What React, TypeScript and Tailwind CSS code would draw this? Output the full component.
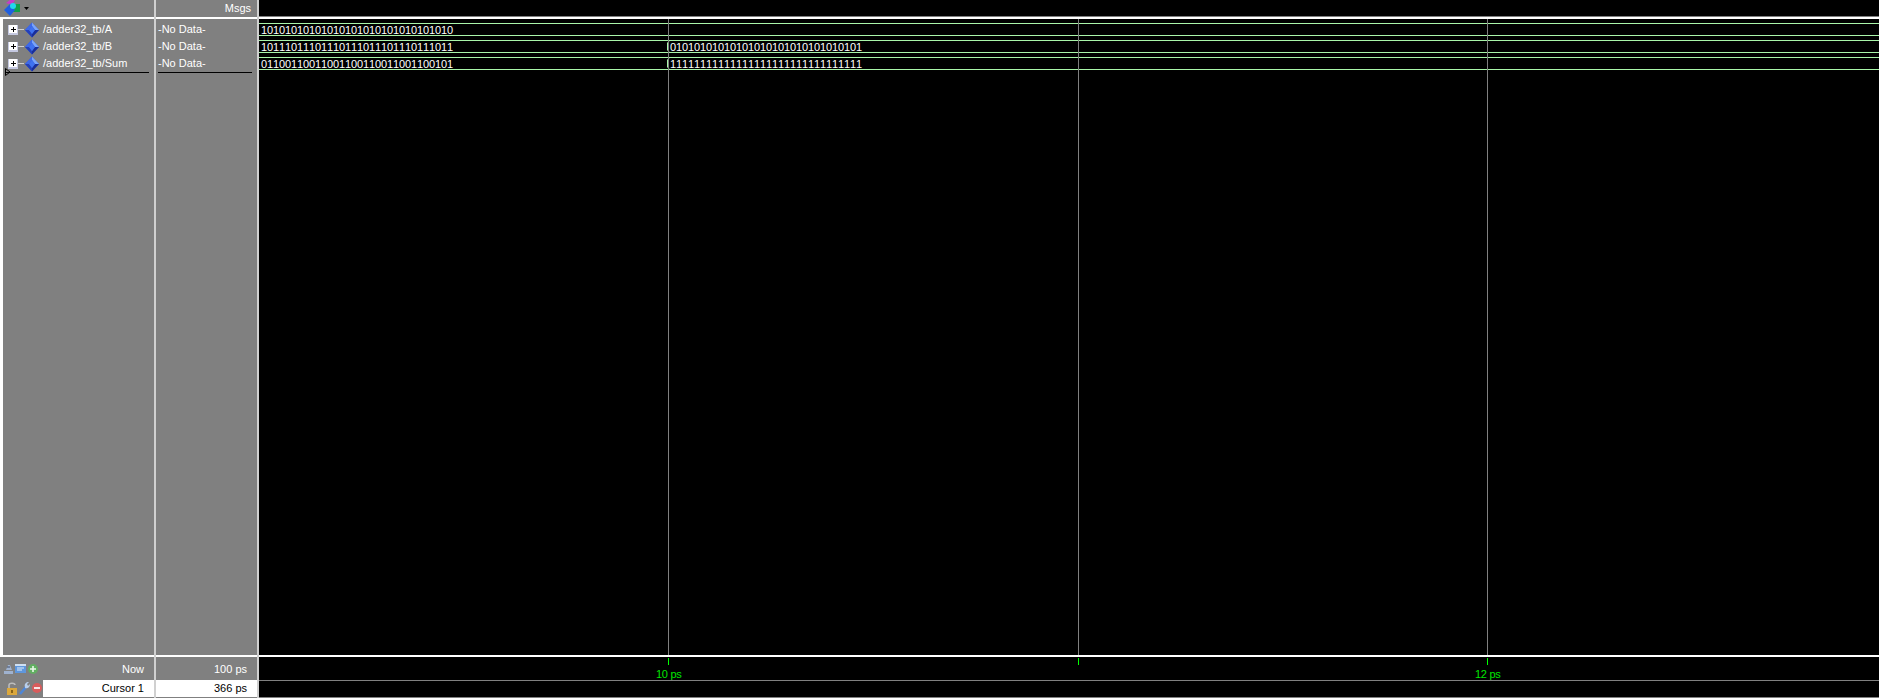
const font = { fontFamily: '"Liberation Sans", Arial, sans-serif' };

function Diamond() {
  return (
    <svg width="16" height="16" viewBox="0 0 16 16" className="shrink-0">
      <polygon points="8,0.5 15,8 8,15.5 1,8" fill="#2f55d8" />
      <polygon points="8,0.5 15,8 11,8 8,4" fill="#7aa4f8" />
      <polygon points="8,0.5 1,8 5,8 8,4" fill="#3f6ae8" />
      <polygon points="1,8 8,15.5 8,12 5,8" fill="#2440b8" />
      <polygon points="15,8 8,15.5 8,12 11,8" fill="#1a2e98" />
      <polygon points="5,8 8,4 11,8 8,12" fill="#3f72f0" />
    </svg>
  );
}

function Plus() {
  return (
    <svg width="16" height="12" viewBox="0 0 16 12" className="shrink-0">
      <line x1="10" y1="5.5" x2="16" y2="5.5" stroke="#d0d0d0" />
      <rect x="0" y="1" width="10" height="10" fill="#c4c8e0" />
      <rect x="1" y="1" width="8" height="8" fill="#ffffff" />
      <path d="M3 5.5H8M5.5 3V8" stroke="#000" strokeWidth="1" fill="none" />
    </svg>
  );
}

function SignalRow({ name }: { name: string }) {
  return (
    <div className="flex h-[17px] items-center pl-[5px]">
      <Plus />
      <Diamond />
      <span className="ml-[3px] text-[11px] leading-none text-white">{name}</span>
    </div>
  );
}

function Digits({ text, className }: { text: string; className: string }) {
  return (
    <span className={`absolute top-0 text-[11px] leading-[13px] tracking-[-0.12px] text-white [font-kerning:none] ${className}`}>
      {text}
    </span>
  );
}

function Bus({ first, second }: { first: string; second?: string }) {
  return (
    <div className="relative mb-[4px] box-content h-[11px] border-y border-[#a9f5a9]">
      <Digits text={first} className="left-[2px]" />
      {second && (
        <>
          <svg width="4" height="13" viewBox="0 0 4 13" className="absolute left-[408px] top-[-1px]">
            <path d="M2.5 0.5L0.5 3V10L2.5 12.5" stroke="#a9f5a9" fill="none" />
          </svg>
          <Digits text={second} className="left-[411px]" />
        </>
      )}
    </div>
  );
}

function TopIcon() {
  return (
    <svg width="30" height="16" viewBox="0 0 30 16" className="shrink-0">
      <polygon points="6,3 10,0 15,0 12,5" fill="#c83cc8" />
      <rect x="13" y="4" width="7" height="8" fill="#12a048" />
      <polygon points="10,4 15,10 10,16 4,10" fill="#1f5fe0" />
      <circle cx="13" cy="6" r="3" fill="#22d8ec" />
      <polygon points="24,7 29,7 26.5,10" fill="#000" />
    </svg>
  );
}

function NowIcons() {
  return (
    <svg width="36" height="12" viewBox="0 0 36 12" className="shrink-0">
      <path d="M0 8H9V11H0ZM2 7L4 2H6L8 7Z" fill="#9fb2cf" />
      <path d="M3 4H6" stroke="#44506a" />
      <rect x="11" y="1" width="11" height="9" fill="#5f97dc" />
      <rect x="11" y="1" width="11" height="2" fill="#cfe0f2" />
      <path d="M13 5H20M13 7H18" stroke="#e4eef9" />
      <circle cx="29" cy="6" r="5" fill="#62ae62" />
      <path d="M26 6H32M29 3V9" stroke="#eaf8ea" strokeWidth="1.6" />
    </svg>
  );
}

function CursorIcons() {
  return (
    <svg width="36" height="14" viewBox="0 0 36 14" className="shrink-0">
      <rect x="0" y="6" width="10" height="7" fill="#dca83c" />
      <rect x="4" y="8" width="2" height="3" fill="#8a6418" />
      <path d="M2 6V3C2 0.5 8 0.5 8 3" stroke="#bdbdbd" strokeWidth="1.5" fill="none" />
      <path d="M13 12L19 5" stroke="#4e86d6" strokeWidth="2.6" />
      <path d="M18 5C17 2 19 0 22 0L20 2L21 4L23 2C23 5 21 7 18 6Z" fill="#b8cfec" />
      <circle cx="30" cy="6" r="5" fill="#d85c5c" />
      <path d="M27 6H33" stroke="#f8e4e4" strokeWidth="2" />
    </svg>
  );
}

function Sash() {
  return <div className="w-[2px] shrink-0 bg-[#d0d0d0]" />;
}

export default function App() {
  const a = "10101010101010101010101010101010";
  const b = "10111011101110111011101110111011";
  const s = "01100110011001100110011001100101";
  const b2 = "01010101010101010101010101010101";
  const s2 = "11111111111111111111111111111111";
  return (
    <div className="flex h-[698px] w-[1879px] flex-col overflow-hidden bg-black" style={font}>
      {/* main */}
      <div className="flex h-[655px]">
        {/* name pane */}
        <div className="flex w-[154px] flex-col bg-[#808080]">
          <div className="flex h-[17px] items-start">
            <TopIcon />
          </div>
          <div className="relative flex-1 border-l-[3px] border-t-2 border-white pt-[2px] pr-px">
            <SignalRow name="/adder32_tb/A" />
            <SignalRow name="/adder32_tb/B" />
            <SignalRow name="/adder32_tb/Sum" />
            <div className="absolute left-[2px] right-[5px] top-[53px] h-px bg-black" />
            <svg width="6" height="8" viewBox="0 0 6 8" className="absolute left-[2px] top-[49px]">
              <path d="M0.5 0.5L5 4L0.5 7.5Z" fill="none" stroke="#000" />
            </svg>
          </div>
        </div>
        <Sash />
        {/* value pane */}
        <div className="flex w-[101px] flex-col bg-[#808080]">
          <div className="flex h-[17px] items-center justify-end pr-[6px] text-[11px] text-white">Msgs</div>
          <div className="h-[2px] bg-white" />
          <div className="relative flex-1 pl-[2px] pt-[2px]">
            <div className="flex h-[17px] items-center text-[11px] leading-none text-white">-No Data-</div>
            <div className="flex h-[17px] items-center text-[11px] leading-none text-white">-No Data-</div>
            <div className="flex h-[17px] items-center text-[11px] leading-none text-white">-No Data-</div>
            <div className="absolute left-[2px] right-[5px] top-[53px] h-px bg-black" />
          </div>
        </div>
        <Sash />
        {/* wave pane */}
        <div className="relative flex-1 bg-black">
          <div className="h-[16px]" />
          <div className="h-px bg-[#808080]" />
          <div className="h-[2px] bg-white" />
          <div className="pt-[4px]">
            <Bus first={a} />
            <Bus first={b} second={b2} />
            <Bus first={s} second={s2} />
          </div>
          <div className="absolute bottom-0 left-[409px] top-[19px] w-px bg-[#808080]" />
          <div className="absolute bottom-0 left-[819px] top-[19px] w-px bg-[#808080]" />
          <div className="absolute bottom-0 left-[1228px] top-[19px] w-px bg-[#808080]" />
        </div>
      </div>
      {/* bottom */}
      <div className="flex flex-1 flex-col">
        <div className="flex h-[2px]">
          <div className="w-[154px] bg-white" />
          <Sash />
          <div className="w-[101px] bg-white" />
          <Sash />
          <div className="flex-1 bg-white" />
        </div>
        <div className="flex flex-1">
          <div className="flex w-[154px] flex-col bg-[#808080]">
            <div className="flex h-[23px] items-center justify-between pl-[4px] pr-[10px] pt-px text-[11px] text-white">
              <NowIcons />
              <span>Now</span>
            </div>
            <div className="flex h-[17px] items-center">
              <div className="flex w-[43px] items-center pl-[7px]">
                <CursorIcons />
              </div>
              <div className="flex h-[17px] flex-1 items-center justify-end bg-white pr-[10px] text-[11px] text-black">Cursor 1</div>
            </div>
          </div>
          <Sash />
          <div className="flex w-[101px] flex-col bg-[#808080]">
            <div className="flex h-[23px] items-center justify-end pr-[10px] pt-px text-[11px] text-white">100 ps</div>
            <div className="flex h-[17px] items-center justify-end bg-white pr-[10px] text-[11px] text-black">366 ps</div>
          </div>
          <Sash />
          <div className="relative flex-1 bg-black">
            <div className="h-[23px]" />
            <div className="h-px bg-[#808080]" />
            <div className="absolute left-[409px] top-px h-[7px] w-px bg-[#00ff00]" />
            <div className="absolute left-[819px] top-px h-[7px] w-px bg-[#00ff00]" />
            <div className="absolute left-[1228px] top-px h-[7px] w-px bg-[#00ff00]" />
            <span className="absolute left-[397px] top-[10px] text-[11px] leading-[14px] tracking-[-0.3px] text-[#00e600]">10 ps</span>
            <span className="absolute left-[1216px] top-[10px] text-[11px] leading-[14px] tracking-[-0.3px] text-[#00e600]">12 ps</span>
            <div className="absolute bottom-0 left-0 right-0 h-px bg-[#808080]" />
          </div>
        </div>
      </div>
    </div>
  );
}
